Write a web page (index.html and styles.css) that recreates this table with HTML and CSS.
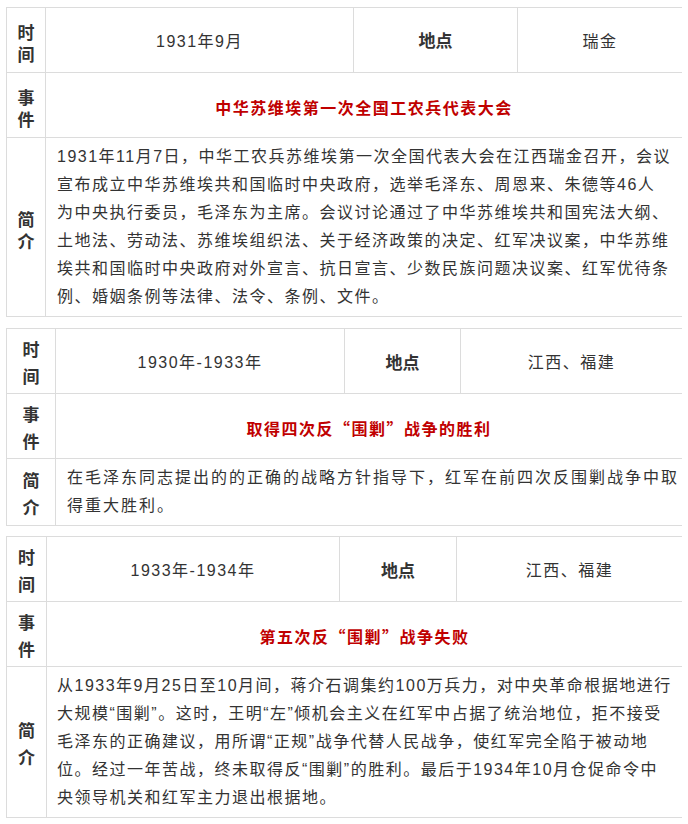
FILE: index.html
```html
<!DOCTYPE html>
<html lang="zh-CN">
<head>
<meta charset="utf-8">
<title>事件表</title>
<link rel="stylesheet" href="styles.css">
</head>
<body>
<div class="info t1">
  <div class="cell label">时间</div>
  <div class="cell value">1931年9月</div>
  <div class="cell label place">地点</div>
  <div class="cell value">瑞金</div>
  <div class="cell label">事件</div>
  <div class="cell title">中华苏维埃第一次全国工农兵代表大会</div>
  <div class="cell label">简介</div>
  <div class="cell intro">1931年11月7日，中华工农兵苏维埃第一次全国代表大会在江西瑞金召开，会议<br>宣布成立中华苏维埃共和国临时中央政府，选举毛泽东、周恩来、朱德等46人<br>为中央执行委员，毛泽东为主席。会议讨论通过了中华苏维埃共和国宪法大纲、<br>土地法、劳动法、苏维埃组织法、关于经济政策的决定、红军决议案，中华苏维<br>埃共和国临时中央政府对外宣言、抗日宣言、少数民族问题决议案、红军优待条<br>例、婚姻条例等法律、法令、条例、文件。</div>
</div>

<div class="info t2">
  <div class="cell label">时间</div>
  <div class="cell value">1930年-1933年</div>
  <div class="cell label place">地点</div>
  <div class="cell value">江西、福建</div>
  <div class="cell label">事件</div>
  <div class="cell title">取得四次反“围剿”战争的胜利</div>
  <div class="cell label">简介</div>
  <div class="cell intro wide">在毛泽东同志提出的的正确的战略方针指导下，红军在前四次反围剿战争中取<br>得重大胜利。</div>
</div>

<div class="info t3">
  <div class="cell label">时间</div>
  <div class="cell value">1933年-1934年</div>
  <div class="cell label place">地点</div>
  <div class="cell value">江西、福建</div>
  <div class="cell label">事件</div>
  <div class="cell title">第五次反“围剿”战争失败</div>
  <div class="cell label">简介</div>
  <div class="cell intro">从1933年9月25日至10月间，蒋介石调集约100万兵力，对中央革命根据地进行<br>大规模“围剿”。这时，王明“左”倾机会主义在红军中占据了统治地位，拒不接受<br>毛泽东的正确建议，用所谓“正规”战争代替人民战争，使红军完全陷于被动地<br>位。经过一年苦战，终未取得反“围剿”的胜利。最后于1934年10月仓促命令中<br>央领导机关和红军主力退出根据地。</div>
</div>
</body>
</html>
```
FILE: styles.css
```css
html, body {
  background: #fff;
}

body {
  margin: 7px 6px;
  font-family: "Liberation Sans", "Noto Sans CJK SC", sans-serif;
  font-size: 16px;
  color: #333;
}

.info {
  display: grid;
  width: 677px;
  box-sizing: border-box;
  padding: 1px;
  gap: 1px;
  background: #dcdcdc;
  grid-template-rows: 64px 64px auto;
}

.t1 {
  grid-template-columns: 38px 307px 163px 164px;
  margin-bottom: 11px;
}

.t2 {
  grid-template-columns: 48px 288px 115px 221px;
  margin-bottom: 10px;
}

.t3 {
  grid-template-columns: 39px 292px 116px 225px;
}

.cell {
  background: #fff;
  display: flex;
  align-items: center;
  justify-content: center;
  text-align: center;
}

.label {
  font-family: "Noto Sans CJK SC", sans-serif;
  font-weight: bold;
  font-size: 17px;
  color: #333;
  padding: 5px 6px 0;
  line-height: 22px;
}

.t2 .label,
.t3 .label {
  line-height: 27px;
  padding-top: 2px;
}

.t2 .label {
  padding-left: 8px;
  padding-right: 8px;
}

.label.place {
  padding: 0 4px;
}

.value {
  letter-spacing: 1.5px;
  padding-bottom: 1px;
}

.title {
  grid-column: 2 / 5;
  font-family: "Noto Sans CJK SC", sans-serif;
  font-weight: bold;
  color: #c00000;
  letter-spacing: 1.5px;
  padding-top: 4px;
}

.intro {
  grid-column: 2 / 5;
  display: block;
  text-align: left;
  padding: 5px 2px 5px 11px;
  line-height: 28px;
  letter-spacing: 1.5px;
  white-space: nowrap;
}

.t3 .intro {
  padding-left: 10px;
}

.intro.wide {
  letter-spacing: 2px;
}
```
